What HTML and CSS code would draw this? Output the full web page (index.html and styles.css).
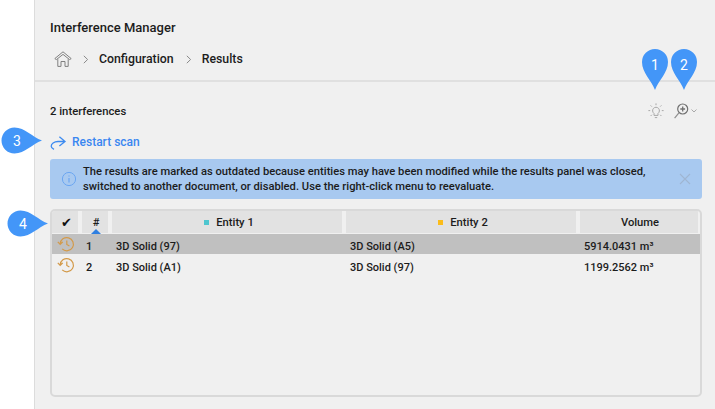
FILE: index.html
```html
<!DOCTYPE html>
<html lang="en">
<head>
<meta charset="utf-8">
<title>Interference Manager</title>
<link rel="stylesheet" href="styles.css">
</head>
<body>
<main class="panel">
  <header class="head">
    <h1 class="title">Interference Manager</h1>
    <nav class="crumbs">
      <svg class="home" width="18" height="16" viewBox="0 0 18 16" fill="none" stroke="#808080" stroke-width="1"><path d="M.8 7.6 9 .8 17.2 7.6 15.6 8.6 9 3.4 2.4 8.6Z"/><path d="M3.8 8.2V15.4H7V10.5H11V15.4H14.2V8.2"/></svg>
      <svg class="chev" width="6" height="9" viewBox="0 0 6 9" fill="none" stroke="#8a8a8a" stroke-width="1"><path d="M.8 .8 4.6 4.5 .8 8.2"/></svg>
      <span class="crumb">Configuration</span>
      <svg class="chev" width="6" height="9" viewBox="0 0 6 9" fill="none" stroke="#8a8a8a" stroke-width="1"><path d="M.8 .8 4.6 4.5 .8 8.2"/></svg>
      <span class="crumb">Results</span>
    </nav>
  </header>
  <section class="body">
    <div class="countbar">
      <span class="count">2 interferences</span>
      <div class="tools">
        <svg width="16" height="16" viewBox="0 0 16 16" fill="none" stroke="#a8a8a8" stroke-width="1"><path d="M6 10.4A3.4 3.4 0 1 1 10 10.4V12.4H6ZM6.800 14.600H9.200M8 .4V2.200M2.600 2.400 3.800 3.600M13.400 2.400 12.200 3.600M.4 7.600H2.200M13.800 7.600H15.600M2.600 13 3.800 11.800M13.400 13 12.200 11.800"/></svg>
        <span class="zoomtool">
          <svg width="15" height="16" viewBox="0 0 15 16" fill="none" stroke="#707070" stroke-width="1.2"><circle cx="8.700" cy="6" r="5"/><path d="M8.700 3.600V8.400M6.300 6H11.100" stroke-width="1.300"/><path d="M5.100 9.600.6 15.200" stroke="#909090"/></svg>
          <svg width="6" height="4" viewBox="0 0 6 4" fill="none" stroke="#a9a9a9" stroke-width="1"><path d="M.5.5 3 3 5.5.5"/></svg>
        </span>
      </div>
    </div>
    <a class="restart">
      <svg width="17" height="15" viewBox="0 0 17 15" fill="none" stroke="#3d8bf0" stroke-width="1.3"><path d="M15 6.500H8C4 6.500 1.200 9 1.200 11.200 1.200 12.500 2.400 13.600 4 14.400M9.400 1.800 15 6.500 9.400 11"/></svg>
      Restart scan
    </a>
    <div class="banner">
      <svg class="info" width="16" height="16" viewBox="0 0 16 16" fill="none" stroke="#6ba6f2" stroke-width="1"><circle cx="8" cy="8" r="6.600"/><path d="M8 7V11.500" stroke-width="1.200"/><path d="M8 4.400V5.600" stroke-width="1.200"/></svg>
      <p class="msg">The results are marked as outdated because entities may have been modified while the results panel was closed, switched to another document, or disabled. Use the right-click menu to reevaluate.</p>
      <svg class="close" width="12" height="12" viewBox="0 0 12 12" fill="none" stroke="#9fb5d2" stroke-width="1.1"><path d="M1 1 11 11M11 1 1 11"/></svg>
    </div>
    <div class="table">
      <div class="row hdr">
        <div class="th check">✔</div>
        <div class="th sorted">#</div>
        <div class="th entity"><i class="dot cyan"></i>Entity 1</div>
        <div class="th entity"><i class="dot amber"></i>Entity 2</div>
        <div class="th">Volume</div>
      </div>
      <div class="row data selected">
        <div class="td stat"><svg class="hist" width="18" height="16" viewBox="0 0 18 16" fill="none" stroke="#d39a4a" stroke-width="1.2"><path d="M3.200 8A6.600 6.600 0 1 1 5.200 12.900M.8 5.800 3.200 8.400 5.800 5.800M9.800 4.400V8.400L12.400 10"/></svg></div>
        <div class="td">1</div><div class="td">3D Solid (97)</div><div class="td">3D Solid (A5)</div><div class="td">5914.0431 m³</div>
      </div>
      <div class="row data">
        <div class="td stat"><svg class="hist" width="18" height="16" viewBox="0 0 18 16" fill="none" stroke="#d39a4a" stroke-width="1.2"><path d="M3.200 8A6.600 6.600 0 1 1 5.200 12.900M.8 5.800 3.200 8.400 5.800 5.800M9.800 4.400V8.400L12.400 10"/></svg></div>
        <div class="td">2</div><div class="td">3D Solid (A1)</div><div class="td">3D Solid (97)</div><div class="td">1199.2562 m³</div>
      </div>
    </div>
  </section>
</main>
<div class="pin pin-1"><svg width="26" height="41" viewBox="0 0 26 41"><path d="M13 41C9.500 31 0 24 0 13A13 13 0 0 1 26 13C26 24 16.500 31 13 41Z"/></svg><span>1</span></div>
<div class="pin pin-2"><svg width="26" height="41" viewBox="0 0 26 41"><path d="M13 41C9.500 31 0 24 0 13A13 13 0 0 1 26 13C26 24 16.500 31 13 41Z"/></svg><span>2</span></div>
<div class="tag tag-3"><svg width="41" height="27" viewBox="0 0 41 27"><path d="M41 13.500C31 10 24 .5 13.500 .5A13 13 0 0 0 13.500 26.500C24 26.500 31 17 41 13.500Z"/></svg><span>3</span></div>
<div class="tag tag-4"><svg width="41" height="27" viewBox="0 0 41 27"><path d="M41 13.500C31 10 24 .5 13.500 .5A13 13 0 0 0 13.500 26.500C24 26.500 31 17 41 13.500Z"/></svg><span>4</span></div>
</body>
</html>
```
FILE: styles.css
```css
* { box-sizing: border-box; }
html, body { height: 100%; }
body {
  margin: 0;
  background: #fff;
  font-family: Roboto, "Liberation Sans", sans-serif;
  color: #1c1c1c;
  overflow: hidden;
  padding-left: 34px;
}
.panel {
  height: 409px;
  background: #f0f0f0;
  border-left: 1px solid #dcdcdc;
  display: flex;
  flex-direction: column;
}
.head {
  height: 82px;
  padding: 20px 0 0 15px;
  border-bottom: 2px solid #e0e0e0;
}
.title {
  margin: 0;
  font-size: 13px;
  line-height: 15px;
  font-weight: 500;
}
.crumbs {
  display: flex;
  align-items: center;
  margin-top: 14px;
  height: 20px;
  padding-left: 4px;
}
.home { margin-right: 11px; }
.chev { margin-right: 10px; }
.crumb {
  font-size: 12.3px;
  font-weight: 500;
  margin-right: 12px;
}
.body {
  flex: 1;
  padding: 0 13px 12px 15px;
  display: flex;
  flex-direction: column;
}
.countbar {
  display: flex;
  justify-content: space-between;
  align-items: center;
  height: 20px;
  margin-top: 19px;
}
.count { font-size: 11.3px; font-weight: 500; }
.tools { display: flex; align-items: center; gap: 10px; margin-right: 5px; }
.zoomtool { display: flex; align-items: center; gap: 2px; }
.restart {
  display: flex;
  align-items: center;
  gap: 5px;
  color: #3a87f0;
  font-size: 12px;
  font-weight: 500;
  height: 20px;
  margin-top: 11px;
}
.banner {
  display: flex;
  align-items: center;
  height: 40px;
  margin-top: 7px;
  background: #a8c9f0;
  border-radius: 3px;
  padding: 0 11px 0 11px;
}
.info { flex: none; margin-right: 6px; }
.msg {
  margin: 0;
  flex: 1;
  font-size: 11.2px;
  line-height: 14.5px;
  font-weight: 500;
  padding: 1px 20px 0 0;
}
.close { flex: none; }
.table {
  flex: 1;
  margin-top: 10px;
  border: 2px solid #d9d9d9;
  border-radius: 5px;
  overflow: hidden;
}
.row {
  display: grid;
  grid-template-columns: 26px 26px 230px 230px 118px;
  column-gap: 4px;
}
.hdr { height: 22px; margin-bottom: 1px; }
.th {
  background: #e2e2e2;
  display: flex;
  align-items: center;
  justify-content: center;
  font-size: 11.2px;
  font-weight: 500;
  position: relative;
  padding: 1px 0 0 2px;
}
.th.entity { padding-left: 4px; }
.check { font-size: 13px; color: #111; }
.sorted::after {
  content: "";
  position: absolute;
  left: 9px;
  bottom: -1px;
  border: 5px solid transparent;
  border-top: 0;
  border-bottom: 5px solid #2f7fe0;
}
.dot { width: 5px; height: 5px; margin-right: 7px; }
.cyan { background: #4fc6cf; }
.amber { background: #fbbc1a; }
.data {
  height: 21px;
  padding-top: 4px;
  border-bottom: 1px solid #f0f0f0;
  align-items: center;
  font-size: 11px;
  font-weight: 500;
}
.selected { background: #c0c0c0; }
.td { padding-left: 4px; white-space: nowrap; }
.stat { padding-left: 5px; display: flex; align-items: center; height: 16px; }
.hist { flex: none; margin-top: -5px; }

.pin, .tag {
  position: absolute;
  color: #fff;
  font-size: 14px;
  line-height: 16px;
}
.pin svg, .tag svg { display: block; fill: #4396f8; }
.pin span, .tag span { position: absolute; text-align: center; }
.pin span { left: 0; width: 26px; top: 8px; }
.tag span { left: 0; width: 32px; top: 6px; }
.pin { top: 49px; }
.pin-1 { left: 642px; }
.pin-2 { left: 671px; }
.tag-3 { left: 1px; top: 127px; }
.tag-4 { left: 7px; top: 210px; }
```
